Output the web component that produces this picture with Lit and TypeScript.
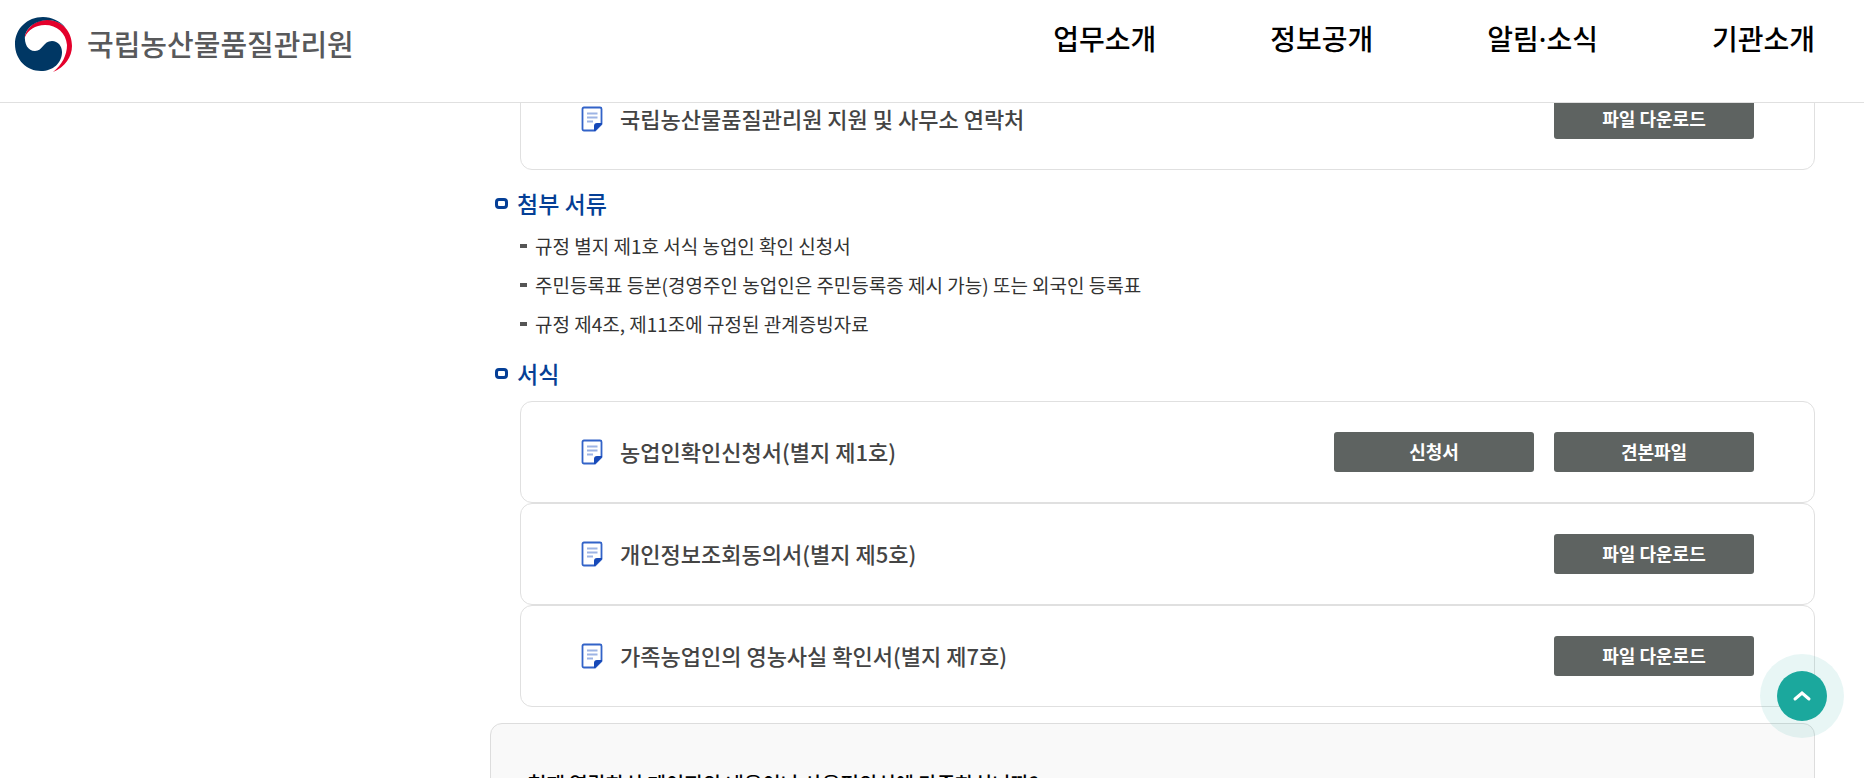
import { LitElement, html, css, svg } from "lit";
import { customElement } from "lit/decorators.js";

interface FormFile {
  title: string;
  actions: string[];
}

const NAV = ["업무소개", "정보공개", "알림·소식", "기관소개"];

const CONTACT_FILES: FormFile[] = [
  { title: "국립농산물품질관리원 지원 및 사무소 연락처", actions: ["파일 다운로드"] },
];

const DOCUMENTS = [
  "규정 별지 제1호 서식 농업인 확인 신청서",
  "주민등록표 등본(경영주인 농업인은 주민등록증 제시 가능) 또는 외국인 등록표",
  "규정 제4조, 제11조에 규정된 관계증빙자료",
];

const FORM_FILES: FormFile[] = [
  { title: "농업인확인신청서(별지 제1호)", actions: ["신청서", "견본파일"] },
  { title: "개인정보조회동의서(별지 제5호)", actions: ["파일 다운로드"] },
  { title: "가족농업인의 영농사실 확인서(별지 제7호)", actions: ["파일 다운로드"] },
];

const emblem = svg`
  <path fill="#e4002b" d="M10 18C14 7 24 2 34 3C48 4 57 15 57 29C57 40 50 50 38 55C47 48 52 38 52 28C51 16 42 8 30 8C20 8 13 13 10 20Z"/>
  <path fill="#003764" d="M51 11C45 4 37 0 28 0C12 0 0 12 0 27C0 43 12 54 26 54C38 54 47 46 47 35C47 29 43 24 37 24C28 24 28 34 20 34C13 34 9 27 10 18C13 9 21 4 32 3C40 3 46 6 51 11Z"/>`;

@customElement("app-root")
export class AppRoot extends LitElement {
  static styles = css`
    :host {
      display: block;
      height: 100vh;
      overflow: hidden;
      background: #fff;
      color: #333;
      font-family: "Noto Sans CJK KR", "Noto Sans", sans-serif;
    }
    *,
    *::before {
      box-sizing: border-box;
    }
    .page {
      display: flex;
      flex-direction: column;
      height: 100%;
    }
    .header {
      display: flex;
      flex: none;
      justify-content: space-between;
      height: 103px;
      padding: 16px 49px 0 15px;
      border-bottom: 1px solid #e0e0e0;
    }
    .brand {
      display: flex;
      align-items: center;
      gap: 14px;
      height: 56px;
      color: #58595b;
      font-size: 29px;
      font-weight: 500;
      line-height: 48px;
      text-decoration: none;
    }
    .brand-name {
      padding-bottom: 2px;
    }
    .emblem {
      width: 58px;
      height: 55px;
    }
    .menu {
      display: flex;
      gap: 114px;
      margin: 0;
      padding: 0;
      list-style: none;
    }
    .menu-link {
      color: #000;
      font-family: "Noto Sans", "Noto Sans CJK KR", sans-serif;
      font-size: 28px;
      font-weight: 500;
      line-height: 46px;
      text-decoration: none;
    }
    .body {
      display: flex;
      flex: 1;
      flex-direction: column;
      justify-content: flex-start;
      min-height: 0;
      overflow: hidden;
      padding: 0 49px 0 490px;
    }
    .files {
      margin: 10px 0 0 30px;
      padding: 0;
      list-style: none;
    }
    .files.scrolled {
      margin-top: -35px;
      margin-bottom: 3px;
    }
    .file {
      display: flex;
      align-items: center;
      height: 102px;
      padding: 0 60px;
      border: 1px solid #e0e0e0;
      border-radius: 12px;
    }
    .file-icon {
      flex: none;
      width: 22px;
      height: 26px;
      margin-right: 17px;
    }
    .file-title {
      flex: 1;
      padding-bottom: 3px;
      color: #444;
      font-size: 22px;
      font-weight: 500;
    }
    .actions {
      display: flex;
      gap: 20px;
    }
    .action {
      width: 200px;
      height: 40px;
      padding: 0 0 2px;
      border: 0;
      border-radius: 3px;
      background: #5e6361;
      color: #fff;
      font: 700 18px/38px "Noto Sans CJK KR", "Noto Sans", sans-serif;
      cursor: pointer;
    }
    .heading {
      display: flex;
      align-items: center;
      gap: 9px;
      margin: 12px 0 0 5px;
      color: #053f96;
      font-size: 23px;
      font-weight: 500;
      line-height: 36px;
    }
    .heading::before {
      content: "";
      width: 13px;
      height: 11px;
      border: 3px solid #053f96;
      border-radius: 4px;
    }
    .documents {
      margin: 5px 0 0 30px;
      padding: 0;
      list-style: none;
    }
    .document {
      display: flex;
      align-items: center;
      gap: 8px;
      font-size: 19px;
      line-height: 39px;
    }
    .document::before {
      content: "";
      width: 7px;
      height: 4px;
      background: #555;
    }
    .survey {
      flex: none;
      margin-top: 16px;
      padding: 44px 37px;
      border: 1px solid #ddd;
      border-radius: 12px;
      background: #f9f9f9;
    }
    .question {
      margin: 0;
      color: #000;
      font-size: 20px;
      font-weight: 500;
      line-height: 32px;
    }
    .to-top {
      position: fixed;
      right: 20px;
      bottom: 40px;
      display: grid;
      place-items: center;
      width: 84px;
      height: 84px;
      padding: 0;
      border: 0;
      border-radius: 50%;
      background: rgba(27, 168, 157, 0.1);
      cursor: pointer;
    }
    .to-top-disc {
      display: grid;
      place-items: center;
      width: 50px;
      height: 50px;
      border-radius: 50%;
      background: #1ba89d;
    }
  `;

  private renderFiles(files: FormFile[], scrolled = false) {
    return html`<ul class="files ${scrolled ? "scrolled" : ""}">
      ${files.map(
        (file) => html`<li class="file">
          <svg class="file-icon" viewBox="0 0 22 26" aria-hidden="true">
            <path d="M3 1.500H19Q20.500 1.500 20.500 3V18L14 24.500H3Q1.500 24.500 1.500 23V3Q1.500 1.500 3 1.500Z" fill="#fff" stroke="#3263c8" stroke-width="1.800" stroke-linejoin="round" />
            <path d="M21 17V18L14 25H13V20Q13 17 16 17Z" fill="#1749b8" />
            <path d="M6 7.500H16.500M6 11.500H16.500M6 15.500H12" stroke="#9db4e4" stroke-width="1.800" />
          </svg>
          <span class="file-title">${file.title}</span>
          <span class="actions">
            ${file.actions.map((label) => html`<button class="action" type="button">${label}</button>`)}
          </span>
        </li>`
      )}
    </ul>`;
  }

  render() {
    return html`<div class="page">
      <header class="header">
        <a class="brand" href="#">
          <svg class="emblem" viewBox="0 0 58 55" aria-hidden="true">${emblem}</svg>
          <span class="brand-name">국립농산물품질관리원</span>
        </a>
        <nav>
          <ul class="menu">
            ${NAV.map((item) => html`<li><a class="menu-link" href="#">${item}</a></li>`)}
          </ul>
        </nav>
      </header>
      <main class="body">
        ${this.renderFiles(CONTACT_FILES, true)}
        <h2 class="heading">첨부 서류</h2>
        <ul class="documents">
          ${DOCUMENTS.map((item) => html`<li class="document">${item}</li>`)}
        </ul>
        <h2 class="heading">서식</h2>
        ${this.renderFiles(FORM_FILES)}
        <section class="survey">
          <p class="question">현재 열람하신 페이지의 내용이나 사용편의성에 만족하십니까?</p>
        </section>
      </main>
      <button class="to-top" type="button" aria-label="맨 위로">
        <span class="to-top-disc">
          <svg width="20" height="14" viewBox="0 0 20 14" aria-hidden="true">
            <path d="M3 10L10 4L17 10" fill="none" stroke="#fff" stroke-width="3" stroke-linecap="round" />
          </svg>
        </span>
      </button>
    </div>`;
  }
}
